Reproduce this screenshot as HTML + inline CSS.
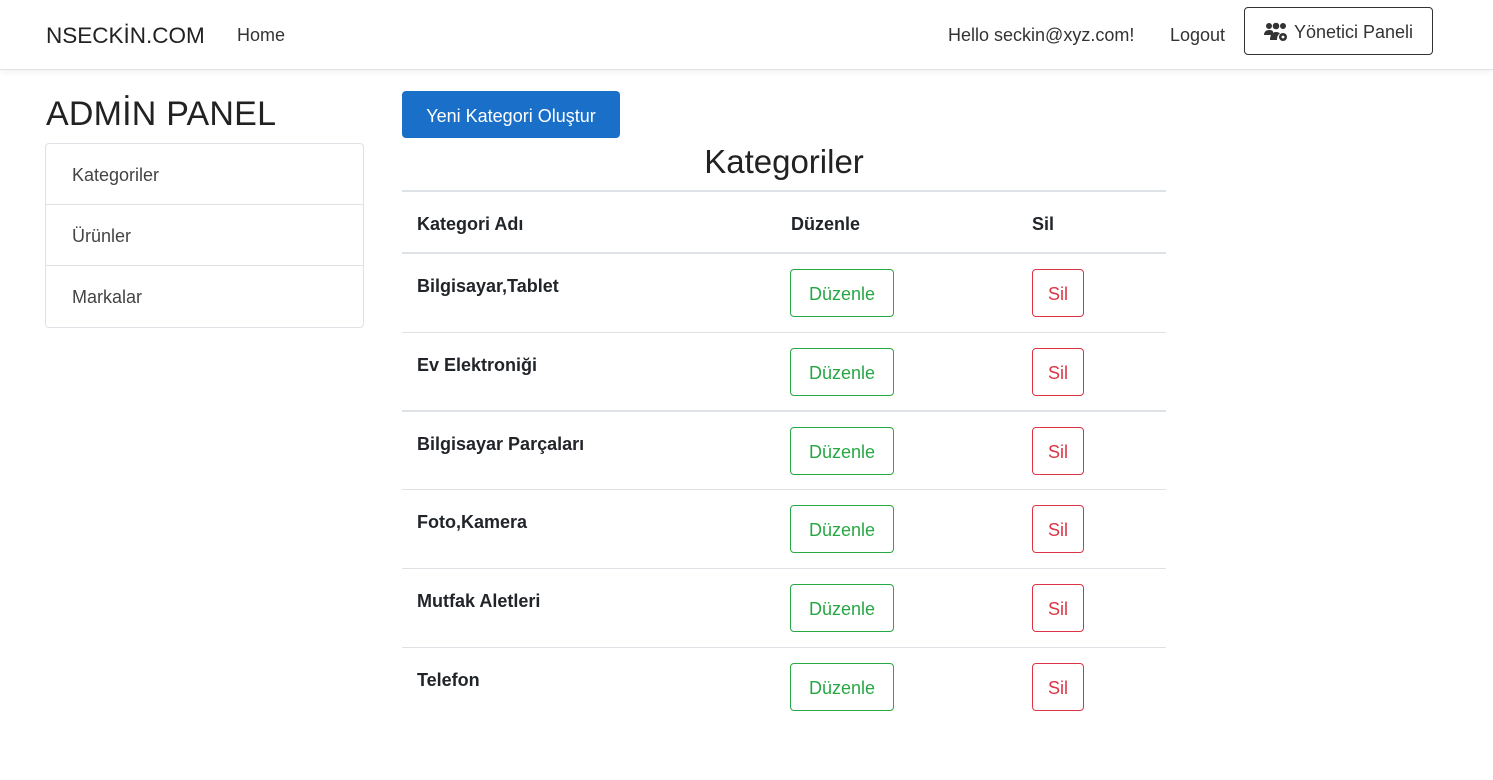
<!DOCTYPE html>
<html><head><meta charset="utf-8"><style>
*{box-sizing:border-box;margin:0;padding:0}
body{width:1493px;height:780px;background:#fff;font-family:"Liberation Sans",sans-serif;color:#212529;position:relative;overflow:hidden}
.nav{position:absolute;left:0;top:0;width:1493px;height:70px;border-bottom:1px solid #dee2e6;box-shadow:0 2px 6px rgba(0,0,0,.06)}
.a{position:absolute;white-space:nowrap}
.brand{left:46px;top:23px;font-size:22.5px;color:#222}
.nl{font-size:18px;color:#333;top:25px}
.yp{left:1244px;top:7px;width:189px;height:48px;border:1px solid #333;border-radius:4px;font-size:18px;display:flex;align-items:center;justify-content:center;gap:6px;color:#333;padding-top:2px}
h1{position:absolute;left:46px;top:95px;font-size:34px;font-weight:normal;color:#222;letter-spacing:.2px}
.list{position:absolute;left:45px;top:143px;width:319px;height:185px;border:1px solid #dee2e6;border-radius:4px}
.list div{height:61px;border-bottom:1px solid #dee2e6;padding:21px 0 0 26px;font-size:18px;color:#444}
.list div:last-child{border:0}
.new{left:402px;top:91px;width:218px;height:47px;background:#1a6fc9;color:#fff;border-radius:4px;font-size:18px;display:flex;align-items:center;justify-content:center;padding-top:3px}
.title{left:402px;width:764px;top:143px;text-align:center;font-size:33px;color:#222}
.line{position:absolute;left:402px;width:764px;height:1px;background:#dee2e6}
.th{font-weight:bold;font-size:18px;top:214px}
.cell{font-weight:bold;font-size:18px}
.bg{position:absolute;left:790px;width:104px;height:48px;border:1px solid #28a745;color:#28a745;border-radius:4px;font-size:18px;display:flex;align-items:center;justify-content:center;padding-top:2px}
.br{position:absolute;left:1032px;width:52px;height:48px;border:1px solid #dc3545;color:#dc3545;border-radius:4px;font-size:18px;display:flex;align-items:center;justify-content:center;padding-top:2px}
</style></head><body>
<div class="nav">
<div class="a brand">NSECKİN.COM</div>
<div class="a nl" style="left:237px">Home</div>
<div class="a nl" style="left:948px">Hello seckin@xyz.com!</div>
<div class="a nl" style="left:1170px">Logout</div>
<div class="a yp"><svg width="24" height="20" viewBox="0 0 24 20" fill="#333"><circle cx="5" cy="4" r="3"/><circle cx="12" cy="4" r="3.3"/><circle cx="19" cy="4" r="3"/><path d="M0 13c0-3 2-5 5-5s4 1 4 2v3z"/><path d="M6 18c0-5 2-8 6-8 2 0 3 .5 4 1.5-2 1-3 3-3 6.5z"/><circle cx="19" cy="15" r="4"/><circle cx="19" cy="15" r="1.4" fill="#fff"/></svg>Yönetici Paneli</div>
</div>
<h1>ADMİN PANEL</h1>
<div class="list"><div>Kategoriler</div><div>Ürünler</div><div>Markalar</div></div>
<div class="a new">Yeni Kategori Oluştur</div>
<div class="a title">Kategoriler</div>
<div class="line" style="top:190px;height:2px"></div>
<div class="a th" style="left:417px">Kategori Adı</div>
<div class="a th" style="left:791px">Düzenle</div>
<div class="a th" style="left:1032px">Sil</div>
<div class="line" style="top:252px;height:2px"></div>

<div class="a cell" style="left:417px;top:276px">Bilgisayar,Tablet</div><div class="bg" style="top:269px">Düzenle</div><div class="br" style="top:269px">Sil</div>
<div class="line" style="top:332px"></div>
<div class="a cell" style="left:417px;top:355px">Ev Elektroniği</div><div class="bg" style="top:348px">Düzenle</div><div class="br" style="top:348px">Sil</div>
<div class="line" style="top:410px;height:2px"></div>
<div class="a cell" style="left:417px;top:434px">Bilgisayar Parçaları</div><div class="bg" style="top:427px">Düzenle</div><div class="br" style="top:427px">Sil</div>
<div class="line" style="top:489px"></div>
<div class="a cell" style="left:417px;top:512px">Foto,Kamera</div><div class="bg" style="top:505px">Düzenle</div><div class="br" style="top:505px">Sil</div>
<div class="line" style="top:568px"></div>
<div class="a cell" style="left:417px;top:591px">Mutfak Aletleri</div><div class="bg" style="top:584px">Düzenle</div><div class="br" style="top:584px">Sil</div>
<div class="line" style="top:647px"></div>
<div class="a cell" style="left:417px;top:670px">Telefon</div><div class="bg" style="top:663px">Düzenle</div><div class="br" style="top:663px">Sil</div>
</body></html>
